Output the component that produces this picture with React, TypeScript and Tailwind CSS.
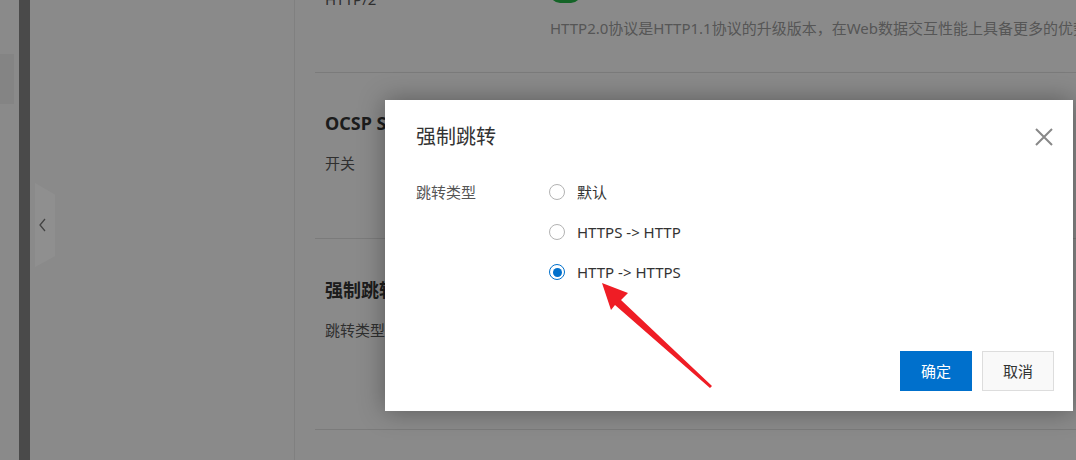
import React from "react";

const Radio = ({ checked, label }: { checked?: boolean; label: string }) => (
  <div className="flex items-center h-[40px] gap-[12px] text-[15px] text-[#333]">
    {checked ? (
      <span className="w-[16px] h-[16px] rounded-full border-[1.5px] border-[#0070cc] flex items-center justify-center">
        <span className="w-[9px] h-[9px] rounded-full bg-[#0070cc]" />
      </span>
    ) : (
      <span className="w-[16px] h-[16px] rounded-full border border-[#b3b3b3] bg-white" />
    )}
    <span>{label}</span>
  </div>
);

const App = () => {
  return (
    <div className="relative w-[1076px] h-[460px] overflow-hidden bg-[#f7f7f7] font-['Noto_Sans','Noto_Sans_CJK_SC',sans-serif]">
      {/* page under the mask */}
      <div className="flex h-full">
        <div className="w-[19px] shrink-0">
          <div className="mt-[54px] h-[50px] w-[14px] bg-[#ececec]" />
        </div>
        <div className="w-[11px] shrink-0 bg-[#848484]" />
        <div className="w-[265px] shrink-0 border-r border-[#e5e5e5] pl-[5px] pt-[183px]">
          <div className="w-[20px] h-[84px] bg-white [clip-path:polygon(0_0,100%_14%,100%_87%,0_100%)] flex items-center justify-center">
            <svg width="8" height="14" viewBox="0 0 8 14" className="-ml-[4px]">
              <path d="M6 1 L1 7 L6 13" fill="none" stroke="#777" strokeWidth="1.3" />
            </svg>
          </div>
        </div>
        <div className="flex-1 min-w-0 pl-[20px] whitespace-nowrap">
          <div className="flex flex-col h-[73px] border-b border-[#dcdcdc] pl-[10px]">
            <div className="-mt-[17px] flex items-start h-[20px]">
              <span className="w-[225px] mt-[6px] text-[15px] leading-[20px] text-[#555]">HTTP/2</span>
              <span className="w-[31px] h-[20px] rounded-full bg-[#24b347]" />
            </div>
            <div className="mt-[15px] pl-[225px] text-[15px] leading-[20px] text-[#999]">
              HTTP2.0协议是HTTP1.1协议的升级版本，在Web数据交互性能上具备更多的优势
            </div>
          </div>
          <div className="flex flex-col h-[166px] border-b border-[#dcdcdc] pl-[10px] pt-[37px]">
            <div className="text-[18px] leading-[26px] font-bold text-[#333]">OCSP Stapling</div>
            <div className="mt-[17px] text-[15px] leading-[20px] text-[#555]">开关</div>
          </div>
          <div className="flex flex-col h-[191px] border-b border-[#dcdcdc] pl-[10px] pt-[38px]">
            <div className="text-[18px] leading-[26px] font-bold text-[#333]">强制跳转</div>
            <div className="mt-[17px] text-[15px] leading-[20px] text-[#555]">跳转类型</div>
          </div>
        </div>
      </div>

      {/* mask */}
      <div className="absolute inset-0 bg-black/[0.44]" />

      {/* dialog */}
      <div className="absolute left-[385px] top-[100px] w-[688px] h-[311px] bg-white shadow-[0_0_24px_rgba(0,0,0,0.35)] flex flex-col">
        <div className="flex items-center justify-between pt-[23px] pl-[31px] pr-[20px]">
          <span className="text-[20px] leading-[28px] text-[#333]">强制跳转</span>
          <svg width="18" height="18" viewBox="0 0 18 18">
            <path d="M1 1 L17 17 M17 1 L1 17" stroke="#888" strokeWidth="2" />
          </svg>
        </div>
        <div className="flex mt-[21px] pl-[31px]">
          <div className="w-[133px] leading-[40px] text-[15px] text-[#555]">跳转类型</div>
          <div className="flex flex-col">
            <Radio label="默认" />
            <Radio label="HTTPS -> HTTP" />
            <Radio checked label="HTTP -> HTTPS" />
          </div>
        </div>
        <div className="mt-auto flex justify-end gap-[10px] pb-[20px] pr-[19px]">
          <button className="w-[72px] h-[40px] bg-[#0070cc] text-white text-[15px]">确定</button>
          <button className="w-[72px] h-[40px] bg-[#f9f9f9] border border-[#dddddd] text-[#333] text-[15px]">取消</button>
        </div>
      </div>

      {/* red annotation arrow */}
      <svg className="absolute inset-0 pointer-events-none" width="1076" height="460">
        <polygon
          points="602,283 628,293 621,300 712,386 710,388 615,305 611,310"
          fill="#ef1d25"
        />
      </svg>
    </div>
  );
};

export default App;
